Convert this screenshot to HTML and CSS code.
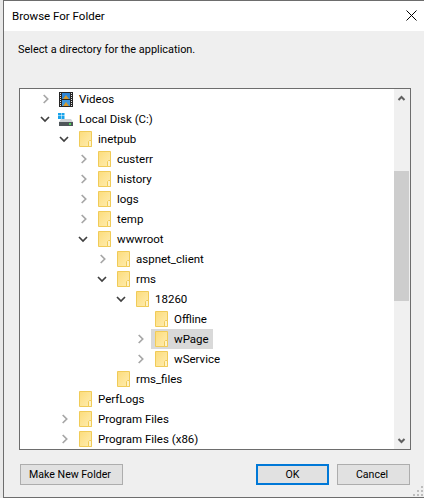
FILE: index.html
```html
<!DOCTYPE html>
<html lang="en">
<head>
  <meta charset="UTF-8">
  <title>Browse For Folder</title>
  <link rel="stylesheet" href="styles.css">
</head>
<body>
  <svg class="defs" width="0" height="0">
    <defs>
      <linearGradient id="folderFill" x1="0" y1="0" x2="1" y2="1">
        <stop offset="0" stop-color="#fcdc7c"/>
        <stop offset="1" stop-color="#ffedb0"/>
      </linearGradient>
    </defs>
    <symbol id="folder" viewBox="0 0 16 16">
      <path d="M2.5.5H14.5V15.5H2.5Z" fill="url(#folderFill)" stroke="#f0cb58"/>
      <path d="M12.5 9.5H14.5V15.5H11.5V10.5Z" fill="#fff3c8" stroke="#f0cb58"/>
    </symbol>
    <symbol id="closed" viewBox="0 0 10 10">
      <path d="M3.7 1L7.7 5L3.7 9" fill="none" stroke="#a6a6a6" stroke-width="1.7"/>
    </symbol>
    <symbol id="open" viewBox="0 0 10 10">
      <path d="M1 3L5 7L9 3" fill="none" stroke="#404040" stroke-width="1.7"/>
    </symbol>
  </svg>

  <div class="dialog">
    <div class="titlebar">
      <span>Browse For Folder</span>
      <svg class="close" width="11" height="11" viewBox="0 0 11 11"><path d="M.5.5L10.5 10.5M10.5.5L.5 10.5" stroke="#000" fill="none"/></svg>
    </div>

    <div class="content">
      <p class="prompt">Select a directory for the application.</p>

      <div class="treebox">
        <div class="tree">
          <div class="row lvl0">
            <svg class="arrow"><use href="#closed"/></svg>
            <svg class="icon" viewBox="0 0 16 16">
              <rect x="1" y="1" width="14" height="15" fill="#262626"/>
              <rect x="4" y="2" width="8" height="6" fill="#2f86d6"/>
              <rect x="4" y="9" width="8" height="6" fill="#3f97dc"/>
              <path d="M5 8L8 4L11 8ZM5 15L8 11L11 15Z" fill="#d79a2a"/>
              <path d="M2.5 2V16M13.5 2V16" stroke="#e6e6e6" stroke-dasharray="1 1"/>
            </svg>
            <span>Videos</span>
          </div>
          <div class="row lvl0">
            <svg class="arrow"><use href="#open"/></svg>
            <svg class="icon" viewBox="0 0 16 16">
              <path d="M0 2H3V4.5H0ZM3.5 2H6.5V4.5H3.5ZM0 5H3V8H0ZM3.5 5H6.5V8H3.5Z" fill="#19a3ea"/>
              <path d="M3 8H13L15 11H1Z" fill="#cfd3d6"/>
              <rect x="1" y="11" width="14" height="4" fill="#4f565a"/>
              <rect x="11" y="12" width="2" height="2" fill="#4fd35a"/>
            </svg>
            <span>Local Disk (C:)</span>
          </div>
          <div class="row lvl1">
            <svg class="arrow"><use href="#open"/></svg>
            <svg class="icon"><use href="#folder"/></svg>
            <span>inetpub</span>
          </div>
          <div class="row lvl2">
            <svg class="arrow"><use href="#closed"/></svg>
            <svg class="icon"><use href="#folder"/></svg>
            <span>custerr</span>
          </div>
          <div class="row lvl2">
            <svg class="arrow"><use href="#closed"/></svg>
            <svg class="icon"><use href="#folder"/></svg>
            <span>history</span>
          </div>
          <div class="row lvl2">
            <svg class="arrow"><use href="#closed"/></svg>
            <svg class="icon"><use href="#folder"/></svg>
            <span>logs</span>
          </div>
          <div class="row lvl2">
            <svg class="arrow"><use href="#closed"/></svg>
            <svg class="icon"><use href="#folder"/></svg>
            <span>temp</span>
          </div>
          <div class="row lvl2">
            <svg class="arrow"><use href="#open"/></svg>
            <svg class="icon"><use href="#folder"/></svg>
            <span>wwwroot</span>
          </div>
          <div class="row lvl3">
            <svg class="arrow"><use href="#closed"/></svg>
            <svg class="icon"><use href="#folder"/></svg>
            <span>aspnet_client</span>
          </div>
          <div class="row lvl3">
            <svg class="arrow"><use href="#open"/></svg>
            <svg class="icon"><use href="#folder"/></svg>
            <span>rms</span>
          </div>
          <div class="row lvl4">
            <svg class="arrow"><use href="#open"/></svg>
            <svg class="icon"><use href="#folder"/></svg>
            <span>18260</span>
          </div>
          <div class="row lvl5">
            <span class="arrow"></span>
            <svg class="icon"><use href="#folder"/></svg>
            <span>Offline</span>
          </div>
          <div class="row lvl5">
            <svg class="arrow"><use href="#closed"/></svg>
            <div class="selected">
              <svg class="icon"><use href="#folder"/></svg>
              <span>wPage</span>
            </div>
          </div>
          <div class="row lvl5">
            <svg class="arrow"><use href="#closed"/></svg>
            <svg class="icon"><use href="#folder"/></svg>
            <span>wService</span>
          </div>
          <div class="row lvl3">
            <span class="arrow"></span>
            <svg class="icon"><use href="#folder"/></svg>
            <span>rms_files</span>
          </div>
          <div class="row lvl1">
            <span class="arrow"></span>
            <svg class="icon"><use href="#folder"/></svg>
            <span>PerfLogs</span>
          </div>
          <div class="row lvl1">
            <svg class="arrow"><use href="#closed"/></svg>
            <svg class="icon"><use href="#folder"/></svg>
            <span>Program Files</span>
          </div>
          <div class="row lvl1">
            <svg class="arrow"><use href="#closed"/></svg>
            <svg class="icon"><use href="#folder"/></svg>
            <span>Program Files (x86)</span>
          </div>
        </div>

        <div class="scrollbar">
          <svg class="scroll-btn" width="16" height="16" viewBox="0 0 16 16"><path d="M4.5 11L7.5 8L10.5 11" fill="none" stroke="#606060" stroke-width="2"/></svg>
          <div class="track"><div class="thumb"></div></div>
          <svg class="scroll-btn" width="16" height="16" viewBox="0 0 16 16"><path d="M4.5 6L7.5 9L10.5 6" fill="none" stroke="#606060" stroke-width="2"/></svg>
        </div>
      </div>

      <div class="buttons">
        <button class="btn new-folder">Make New Folder</button>
        <button class="btn default">OK</button>
        <button class="btn cancel">Cancel</button>
      </div>
    </div>
    <svg class="grip" width="11" height="11" viewBox="0 0 11 11"><path d="M8 0h2v2H8ZM4 4h2v2H4ZM8 4h2v2H8ZM0 8h2v2H0ZM4 8h2v2H4ZM8 8h2v2H8Z" fill="#bdbdbd"/></svg>
  </div>
</body>
</html>
```

FILE: styles.css
```css
html, body {
  margin: 0;
  height: 100%;
  background: #e9e9e9;
}

body {
  font-family: Roboto, "Open Sans", sans-serif;
  font-size: 11.5px;
  color: #000;
  overflow: hidden;
}

.defs {
  position: absolute;
}

.dialog {
  position: relative;
  box-sizing: border-box;
  width: 421px;
  height: 498px;
  margin-left: 3px;
  background: #efefef;
  border-top: 1px solid #6d6d6d;
  border-bottom: 1px solid #6d6d6d;
  border-left: 1px solid #6d6d6d;
}

.titlebar {
  display: flex;
  align-items: center;
  justify-content: space-between;
  height: 30px;
  padding: 0 7px 0 8px;
  background: #fff;
}

.close {
  display: block;
  margin-bottom: 2px;
}

.content {
  padding: 0 13px 0 15px;
}

.prompt {
  box-sizing: border-box;
  height: 57px;
  margin: 0 0 0 -1px;
  padding-top: 10px;
  font-size: 10.9px;
  line-height: 18px;
}

.treebox {
  display: flex;
  box-sizing: border-box;
  height: 362px;
  background: #fff;
  border: 1px solid #6d6d6d;
  overflow: hidden;
}

.tree {
  flex: 1;
  overflow: hidden;
}

.row {
  display: flex;
  align-items: center;
  height: 20px;
  white-space: nowrap;
}

.lvl0 { padding-left: 20px; }
.lvl1 { padding-left: 39px; }
.lvl2 { padding-left: 58px; }
.lvl3 { padding-left: 77px; }
.lvl4 { padding-left: 96px; }
.lvl5 { padding-left: 115px; }

.arrow {
  flex: none;
  width: 10px;
  height: 10px;
  margin-right: 8px;
}

.icon {
  flex: none;
  width: 16px;
  height: 16px;
  margin-right: 5px;
}

.selected {
  display: flex;
  align-items: center;
  height: 20px;
  margin-left: -2px;
  padding-left: 2px;
  padding-right: 4px;
  background: #d9d9d9;
}

.scrollbar {
  display: flex;
  flex-direction: column;
  flex: none;
  width: 16px;
  background: #f0f0f0;
}

.scroll-btn {
  display: block;
  flex: none;
}

.track {
  flex: 1;
  padding-top: 66px;
}

.thumb {
  width: 15px;
  height: 130px;
  background: #cdcdcd;
}

.buttons {
  display: flex;
  gap: 8px;
  margin-top: 14px;
  padding: 0 1px;
}

.btn {
  box-sizing: border-box;
  width: 73px;
  height: 21px;
  padding: 0;
  font-family: inherit;
  font-size: 10.6px;
  color: #000;
  background: #e1e1e1;
  border: 1px solid #adadad;
}

.new-folder {
  width: 103px;
  margin-right: auto;
  padding-right: 3px;
}

.cancel {
  padding-right: 3px;
}

.default {
  border: 2px solid #0078d7;
}

.grip {
  position: absolute;
  right: 0;
  bottom: 0;
}
```
